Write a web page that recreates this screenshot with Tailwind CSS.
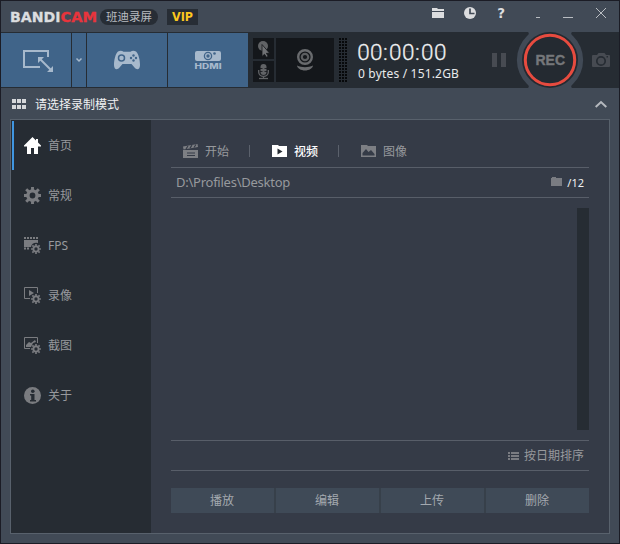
<!DOCTYPE html>
<html lang="zh-CN">
<head>
<meta charset="utf-8">
<title>Bandicam</title>
<script src="https://cdn.jsdelivr.net/npm/@tailwindcss/browser@4"></script>
</head>
<body class="w-[620px] h-[544px] overflow-hidden bg-[#414a56] font-['Noto_Sans','Noto_Sans_CJK_SC',sans-serif] text-[12px]">
<svg width="0" height="0" class="absolute">
  <defs>
    <g id="gear" fill="none" stroke="currentColor">
      <circle cx="0" cy="0" r="4.600" stroke-width="3.400"/>
      <path d="M0-5.500V-8.500M0 5.500V8.500M-5.500 0H-8.500M5.500 0H8.500M-4-4L-6.300-6.300M4-4L6.300-6.300M-4 4L-6.300 6.300M4 4L6.300 6.300" stroke-width="2.900"/>
    </g>
  </defs>
</svg>
<div class="flex flex-col w-[620px] h-[544px] border border-[#1b1c25]">
  <!-- title bar -->
  <header class="flex h-[31px] shrink-0">
    <svg width="98" height="31" viewBox="1 1 98 31" class="shrink-0 font-['DejaVu_Sans',sans-serif]" font-weight="700" font-size="13.700" stroke-width=".3">
      <text x="10" y="22" textLength="50.500" lengthAdjust="spacingAndGlyphs" fill="#dcdddf" stroke="#dcdddf">BANDI</text>
      <text x="60.500" y="22" textLength="36.500" lengthAdjust="spacingAndGlyphs" fill="#e8343c" stroke="#e8343c">CAM</text>
    </svg>
    <div class="mt-2 ml-px w-[58px] h-4 rounded-full bg-[#272d35] text-[#b9bcc0] text-[11.5px] leading-4 text-center whitespace-nowrap">班迪录屏</div>
    <div class="mt-2 ml-[9px] w-[31px] h-4 bg-[#272d35]">
      <svg width="31" height="16" class="font-['DejaVu_Sans',sans-serif]" font-weight="700" font-size="11.500"><text x="5" y="12.300" textLength="21" lengthAdjust="spacingAndGlyphs" fill="#fdc81e">VIP</text></svg>
    </div>
    <svg width="194" height="31" viewBox="425 1 194 31" class="ml-auto shrink-0" fill="#dcdddf">
      <path d="M432 8h5l1 1h6v2h-12zM432 12h12v6h-12z"/>
      <circle cx="470" cy="13" r="6"/><path d="M470 8.500v5h4.500" fill="none" stroke="#414a56" stroke-width="1.700"/>
      <text x="497.300" y="18" font-size="13.500" font-weight="700" class="font-['DejaVu_Sans',sans-serif]">?</text>
      <path d="M536 17h4v1h-4zM563 17h10v1h-10z" fill="#b9bdc2"/>
      <path d="M596 8l10 10M606 8l-10 10" stroke="#b9bdc2" stroke-width="1"/>
    </svg>
  </header>
  <!-- capture toolbar -->
  <section class="flex h-[56px] shrink-0 bg-[#262c33] py-px">
    <div class="w-[70px] h-[54px] bg-[#406489] mr-px">
      <svg width="70" height="54" viewBox="1 33 70 54" fill="none" stroke="#a7b9cc">
        <path d="M40 67H24V51h24v6" stroke-width="2"/>
        <path d="M40 59l11 11" stroke-width="2"/>
        <path d="M38 57h6l-6 6zM53 72h-6l6-6z" fill="#a7b9cc" stroke="none"/>
      </svg>
    </div>
    <div class="w-[14px] h-[54px] bg-[#406489] mr-px">
      <svg width="14" height="54" viewBox="72 33 14 54" fill="none" stroke="#a7b9cc" stroke-width="1.500"><path d="M76.500 58.500l2.500 2.500 2.500-2.500"/></svg>
    </div>
    <div class="w-[80px] h-[54px] bg-[#406489] mr-px">
      <svg width="80" height="54" viewBox="87 33 80 54" fill="#a7b9cc">
        <path d="M118 51.500c2-1 4-.8 5.500.3h7c1.500-1.100 3.500-1.300 5.500-.3 2.500 2 4 8.500 4 13.500 0 4.800-3.300 5.200-5.500 2.500l-3-3.500h-9l-3 3.500c-2.200 2.700-5.500 2.300-5.500-2.500 0-5 1.500-11.500 4-13.500z"/>
        <circle cx="121.500" cy="58" r="3" fill="none" stroke="#406489" stroke-width="1.500"/>
        <g fill="#406489"><circle cx="133.500" cy="55.500" r="1.200"/><circle cx="133.500" cy="60.500" r="1.200"/><circle cx="131" cy="58" r="1.200"/><circle cx="136" cy="58" r="1.200"/></g>
      </svg>
    </div>
    <div class="w-[80px] h-[54px] bg-[#406489]">
      <svg width="80" height="54" viewBox="168 33 80 54" fill="#a7b9cc">
        <rect x="195" y="51" width="26" height="10" rx="2"/>
        <circle cx="208" cy="56" r="3.600" fill="none" stroke="#406489" stroke-width="1.300"/><circle cx="208" cy="56" r="1.700" fill="#406489"/><circle cx="214.500" cy="53.500" r="1.300" fill="#406489"/>
        <text x="194.500" y="69" font-size="7" font-weight="800" textLength="27" lengthAdjust="spacingAndGlyphs" class="font-['Inter','Liberation_Sans',sans-serif]">HDMI</text>
      </svg>
    </div>
    <div class="flex flex-col gap-[2px] ml-[5px] mt-[5px]">
      <div class="w-[21px] h-[21px] bg-[#14171b]">
        <svg width="21" height="21" viewBox="253 38 21 21"><circle cx="263" cy="46" r="5" fill="#616366"/><path d="M262 44.500v12l2.500-2.200 2 3 1.700-1-1.800-3h3.300z" fill="#707275" stroke="#14171b" stroke-width=".8"/></svg>
      </div>
      <div class="w-[21px] h-[21px] bg-[#14171b]">
        <svg width="21" height="21" viewBox="253 61 21 21" fill="none" stroke="#616366"><rect x="260.500" y="64" width="6" height="11" rx="3" fill="#616366" stroke="none"/><path d="M258.700 70v2c0 5.800 9.600 5.800 9.600 0v-2M263.500 76v2" stroke-width="1.300"/><path d="M259 78.500h9" stroke-width="1.300"/><path d="M260 68.500h2.500M264.500 68.500h2.500M260 71.500h2.500M264.500 71.500h2.500" stroke="#14171b" stroke-width=".8"/></svg>
      </div>
    </div>
    <div class="w-[58px] h-[44px] mt-[5px] ml-[2px] bg-[#14171b]">
      <svg width="58" height="44" viewBox="276 38 58 44" fill="none" stroke="#696b6e"><circle cx="305" cy="57" r="6.800" stroke-width="2.400"/><circle cx="305" cy="57" r="3.200" stroke-width="2.200" stroke="#5c5e61"/><path d="M297 65.500c4.500 2.300 11.500 2.300 16 0-.2 2.800-4 5-8 5s-7.800-2.200-8-5z" fill="#696b6e" stroke="none"/></svg>
    </div>
    <svg width="8" height="44" class="ml-[5px] mt-[5px] shrink-0"><defs><pattern id="dots" width="3" height="3" patternUnits="userSpaceOnUse"><path d="M0 0h2v2H0z" fill="#07090b"/></pattern></defs><rect width="8" height="44" fill="url(#dots)"/></svg>
    <div class="flex flex-col ml-[10px] w-[125px] shrink-0">
      <svg width="92" height="33" viewBox="357 33 92 33" fill="#f0f1f2" font-size="22.500" font-weight="300" class="font-['Roboto','Liberation_Sans',sans-serif]">
        <path d="M361 51.500h5M374 51.500h5M393 51.500h5M406 51.500h5M425 51.500h5M438 51.500h5" stroke="#4c5157"/>
        <text x="357.200 370 383 389 402 415 421 434" y="60" stroke="#f0f1f2" stroke-width=".3">00:00:00</text></svg>
      <div class="pl-px text-[12px] leading-4 text-[#e9eaec] whitespace-nowrap tracking-[0.180px]">0 bytes / 151.2GB</div>
    </div>
    <svg width="137" height="56" viewBox="482 32 137 56" class="-mt-px shrink-0 ml-auto">
      <path d="M492 53h5v14h-5zM501 53h5v14h-5z" fill="#474b52"/>
      <path d="M528 32h44q-2 2 1 4a33.500 33.500 0 0 1 0 48q-3 2-1 4h-44q2-2-1-4a33.500 33.500 0 0 1 0-48q3-2 1-4z" fill="#414a56"/>
      <circle cx="550" cy="60" r="28" fill="#242a31"/>
      <circle cx="550" cy="60" r="24.700" fill="none" stroke="#e74b3f" stroke-width="3"/>
      <text x="535.500" y="65" font-size="14" font-weight="700" fill="#75777a" stroke="#75777a" stroke-width=".4" textLength="29.500" lengthAdjust="spacingAndGlyphs" class="font-['Liberation_Sans',sans-serif]">REC</text>
      <path d="M593 55h4l1.500-2h6l1.500 2h3q1 0 1 1v10q0 1-1 1h-16q-1 0-1-1V56q0-1 1-1z" fill="#474b52"/>
      <circle cx="601" cy="61" r="4.200" fill="none" stroke="#262c33" stroke-width="1.700"/><path d="M606.500 56h1.500v1.500h-1.500z" fill="#262c33"/>
    </svg>
  </section>
  <!-- mode heading -->
  <div class="flex items-center h-[31px] shrink-0 pl-[11px] pr-[12px] text-[#f0f1f2]">
    <svg width="14" height="10" fill="#d5d7da"><path d="M0 0h4v4H0zM5 0h4v4H5zM10 0h4v4h-4zM0 6h4v4H0zM5 6h4v4H5zM10 6h4v4h-4z"/></svg>
    <span class="ml-[9px] mt-[2px] leading-4">请选择录制模式</span>
    <svg width="12" height="8" class="ml-auto" fill="none" stroke="#b5b9be" stroke-width="2"><path d="M.7 7L6 2l5.300 5"/></svg>
  </div>
  <main class="flex w-[600px] h-[415px] ml-[9px] shrink-0 border border-[#58616c] bg-[#353b47]">
    <nav class="flex flex-col w-[140px] bg-[#262c33] text-[#97999d] relative pt-px">
      <i class="absolute left-px top-px w-[2px] h-[49px] bg-[#4096e0]"></i>
      <div class="flex items-center h-[50px]">
        <svg width="18" height="18" viewBox="0 0 18 18" class="ml-[13px]" fill="#fff"><path d="M8.500 0L0 8.500v1h3V17h4v-6h3v6h4V9.500h3v-1l-3-3V2h-2v1.500z"/></svg><span class="ml-[6px]">首页</span></div>
      <div class="flex items-center h-[50px]"><svg width="18" height="18" viewBox="-8.5 -8.5 18 18" class="ml-[13px] text-[#7a7c80]"><use href="#gear"/></svg><span class="ml-[6px]">常规</span></div>
      <div class="flex items-center h-[50px]">
        <svg width="18" height="18" viewBox="0 0 18 18" class="ml-[13px] text-[#7a7c80]" fill="currentColor"><path d="M0 0h2v2H0zM3 0h2v2H3zM6 0h2v2H6zM9 0h2v2H9zM12 0h2v2h-2zM0 3h14v3q-6-1-7 4H0zM0 10.500h2v2H0zM3 10.500h2v2H3z"/><use href="#gear" transform="translate(12 12) scale(.58)"/></svg><span class="ml-[6px]">FPS</span></div>
      <div class="flex items-center h-[50px]">
        <svg width="18" height="18" viewBox="0 0 18 18" class="ml-[13px] text-[#7a7c80]"><path d="M6 11.500H.5V.5h13V6" fill="none" stroke="currentColor"/><path d="M5 3l5 3-5 3z" fill="currentColor"/><use href="#gear" transform="translate(12 12) scale(.58)"/></svg><span class="ml-[6px]">录像</span></div>
      <div class="flex items-center h-[50px]">
        <svg width="18" height="18" viewBox="0 0 18 18" class="ml-[13px] text-[#7a7c80]"><path d="M6 11.500H.5V.5h13V6" fill="none" stroke="currentColor"/><path d="M2 10V8l3-3 2 1 4-3 1 2-3 1-2 4z" fill="currentColor"/><use href="#gear" transform="translate(12 12) scale(.58)"/></svg><span class="ml-[6px]">截图</span></div>
      <div class="flex items-center h-[50px]">
        <svg width="18" height="18" viewBox="0 0 18 18" class="ml-[13px]"><circle cx="8.500" cy="8.500" r="8.500" fill="#7a7c80"/><path d="M6 7h4.500v6H12v1.500H6V13h1.200V8.500H6z" fill="#262c33"/><circle cx="8.800" cy="4.200" r="1.800" fill="#262c33"/></svg><span class="ml-[6px]">关于</span></div>
    </nav>
    <section class="flex flex-col w-[418px] ml-[20px] text-[#97999d]">
      <div class="flex items-center h-[48px] border-b border-[#585e69] pt-[15px] pl-[12px]">
        <svg width="16" height="15" viewBox="0 0 16 15" fill="#7d7f84"><path d="M0 2.500L14.500 0l.5 3L.5 5.500z"/><path d="M3 5l2-3M7 4.200l2-3M11 3.500l2-3" stroke="#353b47" stroke-width="1.200"/><path d="M0 6h15v8H0z"/><path d="M4 9h8M4 11.500h8" stroke="#353b47"/></svg>
        <span class="ml-[6px] mt-[2px] w-[24px]">开始</span>
        <i class="ml-[20px] w-px h-[12px] bg-[#5b616c]"></i>
        <svg width="16" height="14" viewBox="0 0 16 14" fill="#fff" class="ml-[22px]"><path d="M0 1h6l1 1h8v11H0z"/><path d="M5.500 4.500v6l5-3z" fill="#262c33"/></svg>
        <span class="ml-[6px] mt-[2px] w-[25px] text-white font-medium whitespace-nowrap">视频</span>
        <i class="ml-[19px] w-px h-[12px] bg-[#5b616c]"></i>
        <svg width="16" height="14" viewBox="0 0 16 14" fill="#7d7f84" class="ml-[22px]"><path d="M0 1h6l1 1h8v11H0z"/><path d="M1.500 11.500V9L5 5l2.500 3L10 6l3.500 4v1.500z" fill="#353b47"/></svg>
        <span class="ml-[6px] mt-[2px]">图像</span>
      </div>
      <div class="flex items-center h-[30px] border-b border-[#585e69] pl-[5px] pr-[5px]">
        <span class="text-[13px] leading-4 -mt-px tracking-[-0.25px]">D:\Profiles\Desktop</span>
        <svg width="12" height="9" class="ml-auto -mt-[3px]" fill="#7a7c82"><path d="M0 1h1V0h4v1h6v8H0z"/></svg>
        <span class="ml-[4px] text-[#f0f1f2] text-[11px] leading-4">/12</span>
      </div>
      <div class="flex justify-end h-[243px] pt-[10px] pb-[10px] border-b border-[#585e69]"><div class="w-[12px] h-[222px] bg-[#262c33]"></div></div>
      <div class="flex items-center justify-end h-[30px] pr-[5px] border-b border-[#585e69]">
        <svg width="12" height="8" class="mr-[4px]" fill="#7a7c82"><path d="M0 0h2v2H0zM3 0h8v2H3zM0 3h2v2H0zM3 3h8v2H3zM0 6h2v2H0zM3 6h8v2H3z"/></svg>
        <span>按日期排序</span>
      </div>
      <div class="grid grid-cols-4 gap-[2px] mt-[17px] h-[25px] leading-[25px] text-center text-[#a4a9af] bg-[#37404a]">
        <div class="bg-[#3f4a57] pr-px">播放</div><div class="bg-[#3f4a57] pr-px">编辑</div><div class="bg-[#3f4a57] pr-px">上传</div><div class="bg-[#3f4a57] pr-px">删除</div>
      </div>
    </section>
  </main>
</div>
</body>
</html>
